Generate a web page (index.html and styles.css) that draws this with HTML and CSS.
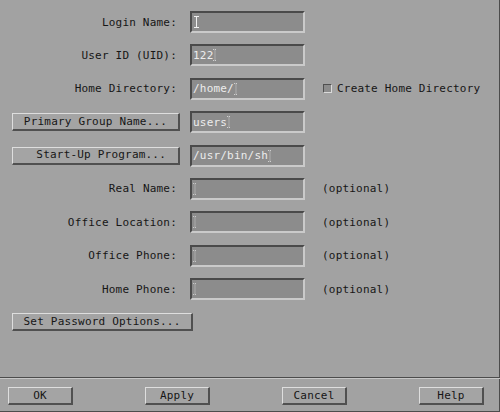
FILE: index.html
```html
<!DOCTYPE html>
<html>
<head>
<meta charset="utf-8">
<link rel="stylesheet" href="styles.css">
</head>
<body>
<div class="dialog">
  <div class="form">
    <div class="label">Login Name:</div>
    <div class="field"><span class="cursor focus"><svg width="5" height="12" viewBox="0 0 5 12"><path d="M0 0.5H5M2.5 0.5V11.5M0 11.5H5" stroke="#f0f0f0" stroke-width="1" fill="none"/></svg></span></div>
    <div class="extra"></div>

    <div class="label">User ID (UID):</div>
    <div class="field"><span class="val">122</span><span class="cursor"><svg width="4" height="12" viewBox="0 0 4 12"><path d="M0 0.5H4M2 0.5V11.5M0 11.5H4" stroke="#d0d0d0" stroke-width="1" stroke-dasharray="1 1" fill="none"/></svg></span></div>
    <div class="extra"></div>

    <div class="label">Home Directory:</div>
    <div class="field"><span class="val">/home/</span><span class="cursor"><svg width="4" height="12" viewBox="0 0 4 12"><path d="M0 0.5H4M2 0.5V11.5M0 11.5H4" stroke="#d0d0d0" stroke-width="1" stroke-dasharray="1 1" fill="none"/></svg></span></div>
    <div class="extra"><span class="check"></span><span>Create Home Directory</span></div>

    <div class="btncell"><button class="btn wide">Primary Group Name...</button></div>
    <div class="field"><span class="val">users</span><span class="cursor"><svg width="4" height="12" viewBox="0 0 4 12"><path d="M0 0.5H4M2 0.5V11.5M0 11.5H4" stroke="#d0d0d0" stroke-width="1" stroke-dasharray="1 1" fill="none"/></svg></span></div>
    <div class="extra"></div>

    <div class="btncell"><button class="btn wide right">Start-Up Program...</button></div>
    <div class="field"><span class="val">/usr/bin/sh</span><span class="cursor"><svg width="4" height="12" viewBox="0 0 4 12"><path d="M0 0.5H4M2 0.5V11.5M0 11.5H4" stroke="#d0d0d0" stroke-width="1" stroke-dasharray="1 1" fill="none"/></svg></span></div>
    <div class="extra"></div>

    <div class="label">Real Name:</div>
    <div class="field"><span class="cursor"><svg width="4" height="12" viewBox="0 0 4 12"><path d="M0 0.5H4M2 0.5V11.5M0 11.5H4" stroke="#c8c8c8" stroke-width="1" stroke-dasharray="1 1" fill="none"/></svg></span></div>
    <div class="extra">(optional)</div>

    <div class="label">Office Location:</div>
    <div class="field"><span class="cursor"><svg width="4" height="12" viewBox="0 0 4 12"><path d="M0 0.5H4M2 0.5V11.5M0 11.5H4" stroke="#c8c8c8" stroke-width="1" stroke-dasharray="1 1" fill="none"/></svg></span></div>
    <div class="extra">(optional)</div>

    <div class="label">Office Phone:</div>
    <div class="field"><span class="cursor"><svg width="4" height="12" viewBox="0 0 4 12"><path d="M0 0.5H4M2 0.5V11.5M0 11.5H4" stroke="#c8c8c8" stroke-width="1" stroke-dasharray="1 1" fill="none"/></svg></span></div>
    <div class="extra">(optional)</div>

    <div class="label">Home Phone:</div>
    <div class="field"><span class="cursor"><svg width="4" height="12" viewBox="0 0 4 12"><path d="M0 0.5H4M2 0.5V11.5M0 11.5H4" stroke="#c8c8c8" stroke-width="1" stroke-dasharray="1 1" fill="none"/></svg></span></div>
    <div class="extra">(optional)</div>
  </div>
  <div class="pwrow"><button class="btn pw">Set Password Options...</button></div>
  <div class="spacer"></div>
  <div class="sep"></div>
  <div class="actions">
    <button class="btn act">OK</button>
    <button class="btn act">Apply</button>
    <button class="btn act">Cancel</button>
    <button class="btn act">Help</button>
  </div>
</div>
</body>
</html>
```

FILE: styles.css
```css
html, body {
  margin: 0;
  padding: 0;
  background: #a2a2a2;
}
.dialog {
  width: 500px;
  height: 412px;
  box-sizing: border-box;
  display: flex;
  flex-direction: column;
  background: #a2a2a2;
  border-right: 1px solid #4c4c4c;
  border-bottom: 1px solid #4c4c4c;
  font-family: "DejaVu Sans Mono", "Liberation Mono", monospace;
  font-size: 11px;
  letter-spacing: 0.2px;
  color: #161616;
}
.form {
  display: grid;
  grid-template-columns: 168px 115px 1fr;
  column-gap: 10px;
  row-gap: 11.4px;
  grid-auto-rows: 22px;
  padding: 11px 0 0 12px;
}
.form .extra {
  margin-left: 7px;
}
.label {
  display: flex;
  align-items: center;
  justify-content: flex-end;
  padding-right: 3px;
  white-space: nowrap;
}
.field {
  box-sizing: border-box;
  background: #8c8c8c;
  border-top: 2px solid #4a4a4a;
  border-left: 2px solid #4a4a4a;
  border-bottom: 2px solid #cacaca;
  border-right: 2px solid #cacaca;
  display: flex;
  align-items: center;
  padding-left: 1px;
  color: #ececec;
  white-space: nowrap;
}
.cursor {
  display: flex;
  align-items: center;
}
.cursor.focus {
  margin-left: 1px;
}
.extra {
  display: flex;
  align-items: center;
  white-space: nowrap;
}
.check {
  width: 9px;
  height: 9px;
  box-sizing: border-box;
  background: #8c8c8c;
  border-top: 1px solid #505050;
  border-left: 1px solid #505050;
  border-bottom: 1px solid #dadada;
  border-right: 1px solid #dadada;
  margin: 0 5px 0 1px;
}
.btncell {
  display: flex;
  align-items: center;
}
.btn {
  font: inherit;
  letter-spacing: inherit;
  color: #161616;
  background: #a4a4a4;
  box-sizing: border-box;
  height: 18px;
  padding: 0;
  margin: 0;
  border-top: 1px solid #dedede;
  border-left: 1px solid #dedede;
  border-bottom: 2px solid #505050;
  border-right: 2px solid #505050;
  border-radius: 0;
  white-space: nowrap;
  line-height: 14px;
}
.btn.wide {
  width: 168px;
}
.btn.right {
  text-align: right;
  padding-right: 12px;
}
.pwrow {
  padding: 13px 0 0 12px;
  display: flex;
}
.btn.pw {
  width: 181px;
}
.spacer {
  flex: 1;
}
.sep {
  border-top: 1px solid #4c4c4c;
  border-bottom: 1px solid #c6c6c6;
  margin: 0 -1px 0 0;
}
.actions {
  display: flex;
  justify-content: space-between;
  padding: 8px 15px 6px 8px;
}
.btn.act {
  width: 65px;
}
```
